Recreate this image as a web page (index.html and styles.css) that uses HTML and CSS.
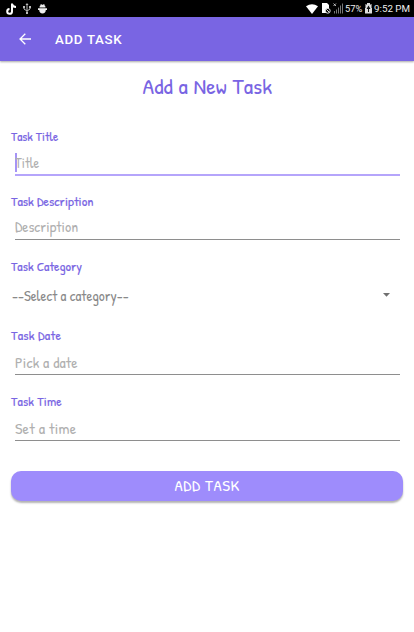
FILE: index.html
```html
<!DOCTYPE html>
<html lang="en">
<head>
<meta charset="utf-8">
<title>Add Task</title>
<link rel="stylesheet" href="styles.css">
</head>
<body>
<div class="status">
  <div class="status-left">
    <svg width="11" height="12" viewBox="0 0 11 12" fill="none" stroke="#fff" stroke-width="2"><path d="M6 0.5V8.4A2.4 2.4 0 1 1 3.5 6M6 1C6.3 3 7.6 4 10 4"/></svg>
    <svg width="8" height="11" viewBox="0 0 8 11" fill="none" stroke="#bbb"><path d="M4 1V10M1 3.5V6L4 8L7 6V3.5"/><path d="M2.5 2L4 0L5.500 2ZM0 3H2V5H0ZM6 3H8V5H6ZM3 9H5V11H3Z" fill="#bbb" stroke="none"/></svg>
    <svg width="9" height="10" viewBox="0 0 9 10" fill="#eee"><path d="M1.500 3.500C1.500 2 2.200 1.200 3 1L2.300 0H3.200L3.800.8H5.200L5.800 0H6.700L6 1C6.800 1.200 7.500 2 7.500 3.500ZM0 4.200H9V6H7.800C7.800 8 6.500 9.500 4.500 9.500S1.200 8 1.200 6H0Z"/></svg>
  </div>
  <div class="status-right">
    <svg width="12" height="10" viewBox="0 0 12 10"><path d="M0 2.300Q6-1.700 12 2.300L6 10Z" fill="#fff"/></svg>
    <svg class="sim" width="9" height="11" viewBox="0 0 9 11"><path d="M0 0H5L7 2V10H0Z" fill="#fff"/><circle cx="5.800" cy="7.800" r="2.400" fill="#000" stroke="#ddd"/><path d="M4.300 6.300L7.300 9.300" stroke="#ddd"/></svg>
    <svg class="signal" width="11" height="11" viewBox="0 0 11 11"><path d="M.5.500L3 3M3 .5L.5 3" stroke="#ddd" stroke-width=".8"/><path d="M1 8H2V10.500H1ZM3 6.500H4V10.500H3ZM5 4.500H6V10.500H5ZM7 2.500H8V10.500H7ZM9 .5H10V10.500H9Z" fill="#777"/></svg>
    <span class="percent">57%</span>
    <svg class="battery" width="7" height="11" viewBox="0 0 7 11"><path d="M2 0H5V1.500H7V10.500H0V1.500H2Z" fill="#ddd"/><path d="M0 1.500H1V5H0ZM6 1.500H7V5H6Z" fill="#777"/><path d="M3.500 2.500L1.500 6H3V9H4V6H5.500Z" fill="#111"/></svg>
    <span class="clock">9:52 PM</span>
  </div>
</div>
<header class="appbar">
  <svg width="12" height="12" viewBox="0 0 12 12" fill="none" stroke="#fff" stroke-width="1.300"><path d="M12 6H1M6.300.7L1 6L6.300 11.300"/></svg>
  <span class="appbar-title">ADD TASK</span>
</header>
<main class="form">
  <h1 class="heading"><span>Add a New Task</span></h1>
  <section class="field"><label class="label l-title">Task Title</label><div class="input focused"><i class="caret"></i><span class="hint p-title">Title</span></div></section>
  <section class="field"><label class="label l-desc">Task Description</label><div class="input"><span class="hint p-desc">Description</span></div></section>
  <section class="field category"><label class="label l-cat">Task Category</label><div class="select"><span>--Select a category--</span><svg width="7" height="4" viewBox="0 0 7 4"><path d="M0 0H7L3.500 3.800Z" fill="#707070"/></svg></div></section>
  <section class="field date"><label class="label l-date">Task Date</label><div class="input"><span class="hint p-date">Pick a date</span></div></section>
  <section class="field time"><label class="label l-time">Task Time</label><div class="input"><span class="hint p-time">Set a time</span></div></section>
  <button class="submit"><span>ADD TASK</span></button>
</main>
</body>
</html>
```
FILE: styles.css
```css
* { box-sizing: border-box; }
body { margin: 0; width: 414px; height: 632px; background: #fff; overflow: hidden; font-family: "Coming Soon", "Patrick Hand", Lato, "Open Sans", sans-serif; }
svg { display: block; flex: none; }
.status { height: 17px; background: #000; color: #eee; display: flex; justify-content: space-between; padding: 0 4px 0 6px; font: 9.5px/17px Roboto, sans-serif; }
.status-left, .status-right { display: flex; align-items: center; }
.status-left { gap: 6px; }
.status-left svg:last-child { margin-left: 1px; }
.sim { margin-left: 4px; }
.signal { margin-left: 2px; }
.percent { width: 18px; margin-left: 1px; font-size: 9.3px; }
.battery { margin-left: 2px; }
.clock { width: 36px; margin-left: 2px; font-size: 9.8px; white-space: nowrap; }
.appbar { height: 44px; background: #7965e3; display: flex; align-items: center; padding-left: 19px; gap: 24px; box-shadow: 0 1px 2px rgba(0,0,0,.35); }
.appbar-title { color: #fff; font: 500 13.3px/20px Roboto, sans-serif; letter-spacing: .68px; padding-top: 1px; }
.form { padding: 13px 11px 0; }
.heading { margin: 0 0 30px; height: 25px; color: #7965e3; text-align: center; font-size: 21px; line-height: 25px; font-weight: 400; }
.heading span { display: inline-block; transform: scaleX(1.13); letter-spacing: .1px; }
.field { height: 65px; }
.category { height: 69px; }
.date { height: 66px; }
.time { height: 77px; }
.label { display: block; width: max-content; height: 16px; color: #7965e3; font-size: 12.5px; line-height: 15px; white-space: nowrap; transform-origin: left; -webkit-text-stroke: .15px #7965e3; }
.l-title { transform: scaleX(1.05); }
.l-desc { transform: scaleX(1.1); }
.l-cat { transform: scaleX(1.085); }
.l-date { transform: scaleX(1.1); letter-spacing: .2px; }
.l-time { transform: scaleX(1.08); letter-spacing: .15px; }
.input { position: relative; height: 30px; margin: 0 3px 0 4px; padding-top: 8px; border-bottom: 1px solid #8e8e8e; color: #b0b0b0; font-size: 14px; line-height: 18px; white-space: nowrap; }
.date .input, .time .input { height: 31px; padding-top: 10px; }
.hint { display: inline-block; transform-origin: left; }
.p-title { transform: scaleX(1.02); }
.p-desc { transform: scaleX(1.1); }
.p-date { transform: scaleX(1.13); letter-spacing: .1px; }
.p-time { transform: scaleX(1.15); letter-spacing: .15px; }
.input.focused { height: 31px; padding-top: 9px; border-bottom: 2px solid #b5a5fb; }
.caret { position: absolute; left: 0; top: 8px; width: 2px; height: 19px; background: #a594f5; }
.select { height: 34px; display: flex; align-items: center; justify-content: space-between; padding: 0 13px 0 1px; margin-top: 3px; color: #898989; font-size: 14px; }
.select span { transform: scaleX(1.055); transform-origin: left; }
.submit { display: block; width: 392px; height: 30px; border: 0; border-radius: 10px; background: #9e8cfc; color: #fff; box-shadow: 0 2px 2px rgba(0,0,0,.3); font: 400 14px/28px "Coming Soon", "Patrick Hand", Lato, sans-serif; padding: 0; letter-spacing: .5px; }
.submit span { display: inline-block; transform: scaleX(1.2); }
```
